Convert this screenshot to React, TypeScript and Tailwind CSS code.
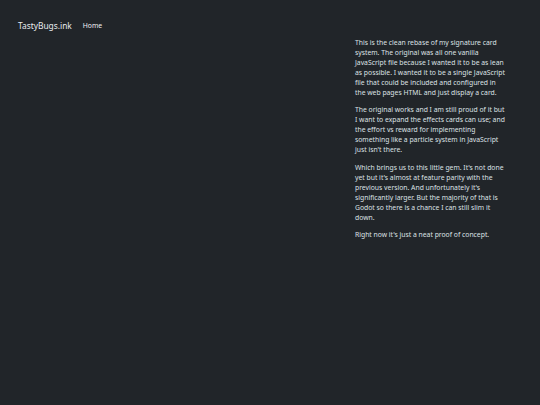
export default function App() {
  return (
    <div
      className="min-h-[405px] w-full bg-[#212529] text-[#dee2e6]"
      style={{ fontFamily: '"Noto Sans", "Open Sans", sans-serif' }}
    >
      <nav className="flex items-center gap-[11px] px-[18px] pt-[18px] h-[34px]">
        <span className="text-[8.4px] leading-none text-[#e9ecef]">TastyBugs.ink</span>
        <span className="text-[6.8px] leading-none text-[#f1f3f5]">Home</span>
      </nav>
      <main className="flex pl-[355px] pt-[4px]">
        <div className="w-[151px] text-[6.8px] leading-[10px] flex flex-col gap-[7.3px]">
          <p>
            This is the clean rebase of my signature card system. The original was all one vanilla
            JavaScript file because I wanted it to be as lean as possible. I wanted it to be a single
            JavaScript file that could be included and configured in the web pages HTML and just
            display a card.
          </p>
          <p>
            The original works and I am still proud of it but I want to expand the effects cards can
            use; and the effort vs reward for implementing something like a particle system in
            JavaScript just isn't there.
          </p>
          <p>
            Which brings us to this little gem. It's not done yet but it's almost at feature parity
            with the previous version. And unfortunately it's significantly larger. But the majority
            of that is Godot so there is a chance I can still slim it down.
          </p>
          <p>Right now it's just a neat proof of concept.</p>
        </div>
      </main>
    </div>
  );
}
